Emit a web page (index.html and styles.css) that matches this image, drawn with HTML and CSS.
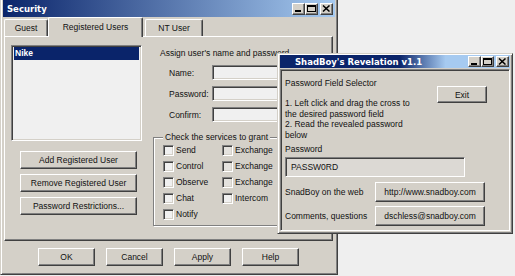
FILE: index.html
```html
<!DOCTYPE html>
<html lang="en">
<head>
  <meta charset="UTF-8">
  <title>Security</title>
  <link rel="stylesheet" href="styles.css">
</head>
<body>

<div class="desktop">

  <div class="window security">
    <div class="titlebar">
      <span>Security</span>
      <div class="tbtns">
        <span class="tbtn"><svg width="9" height="7" viewBox="0 0 9 7"><rect x="1" y="5" width="6" height="2"/></svg></span>
        <span class="tbtn"><svg width="9" height="7" viewBox="0 0 9 7"><path fill-rule="evenodd" d="M0 0h9v7H0z M1 2v4h7V2z"/></svg></span>
        <span class="tbtn close"><svg width="9" height="7" viewBox="0 0 9 7"><path d="M1 0.5L7.5 6.5M7.5 0.5L1 6.5" stroke="#000" stroke-width="1.5" fill="none"/></svg></span>
      </div>
    </div>

    <div class="tabs">
      <div class="tab guest">Guest</div>
      <div class="tab active">Registered Users</div>
      <div class="tab nt">NT User</div>
    </div>

    <div class="tab-panel">
      <div class="left-col">
        <div class="listbox">
          <div class="list-item selected">Nike</div>
        </div>
        <button class="btn side-btn first">Add Registered User</button>
        <button class="btn side-btn">Remove Registered User</button>
        <button class="btn side-btn">Password Restrictions...</button>
      </div>

      <div class="right-col">
        <div class="assign">Assign user's name and password</div>
        <div class="field-row"><label>Name:</label><div class="field"></div></div>
        <div class="field-row"><label>Password:</label><div class="field"></div></div>
        <div class="field-row"><label>Confirm:</label><div class="field"></div></div>

        <fieldset class="services">
          <legend>Check the services to grant</legend>
          <div class="check-grid">
            <div class="check"><span class="box"></span>Send</div>
            <div class="check"><span class="box dim"></span>Exchange</div>
            <div class="check"><span class="box"></span>Control</div>
            <div class="check"><span class="box dim"></span>Exchange</div>
            <div class="check"><span class="box"></span>Observe</div>
            <div class="check"><span class="box dim"></span>Exchange</div>
            <div class="check"><span class="box"></span>Chat</div>
            <div class="check"><span class="box"></span>Intercom</div>
            <div class="check"><span class="box"></span>Notify</div>
          </div>
        </fieldset>
      </div>
    </div>

    <div class="dialog-buttons">
      <button class="btn dlg-btn">OK</button>
      <button class="btn dlg-btn">Cancel</button>
      <button class="btn dlg-btn">Apply</button>
      <button class="btn dlg-btn">Help</button>
    </div>
  </div>

  <div class="window reveal">
    <div class="titlebar">
      <span>ShadBoy's Revelation v1.1</span>
      <div class="tbtns">
        <span class="tbtn"><svg width="9" height="7" viewBox="0 0 9 7"><rect x="1" y="5" width="6" height="2"/></svg></span>
        <span class="tbtn"><svg width="9" height="7" viewBox="0 0 9 7"><path fill-rule="evenodd" d="M0 0h9v7H0z M1 2v4h7V2z"/></svg></span>
        <span class="tbtn close"><svg width="9" height="7" viewBox="0 0 9 7"><path d="M1 0.5L7.5 6.5M7.5 0.5L1 6.5" stroke="#000" stroke-width="1.5" fill="none"/></svg></span>
      </div>
    </div>

    <div class="client">
      <div class="rev-top">
        <div class="rev-text">
          <div class="heading">Password Field Selector</div>
          <div class="steps">
            1. Left click and drag the cross to<br>
            the desired password field<br>
            2. Read the revealed password<br>
            below
          </div>
        </div>
        <button class="btn exit-btn">Exit</button>
      </div>

      <div class="pw-label">Password</div>
      <div class="pw-field">PASSW0RD</div>

      <div class="link-row">
        <span class="link-label">SnadBoy on the web</span>
        <button class="btn link-btn">http://www.snadboy.com</button>
      </div>
      <div class="link-row second">
        <span class="link-label">Comments, questions</span>
        <button class="btn link-btn">dschless@snadboy.com</button>
      </div>
    </div>
  </div>

</div>

</body>
</html>
```

FILE: styles.css
```css
* {
  box-sizing: border-box;
}
body {
  margin: 0;
  background: #efefef;
  font-family: "Liberation Sans", Arial, sans-serif;
  font-size: 8.5px;
  color: #111;
}
.desktop {
  position: relative;
  width: 515px;
  height: 276px;
  overflow: hidden;
}

/* windows */
.window {
  position: absolute;
  display: flex;
  flex-direction: column;
  background: #d4d0c8;
  border: 1px solid;
  border-color: #d4d0c8 #404040 #404040 #d4d0c8;
  box-shadow: inset 1px 1px #fff, inset -1px -1px #808080;
  padding: 2px;
}
.security {
  left: 0;
  top: -3px;
  width: 338px;
  height: 278px;
}
.reveal {
  left: 277px;
  top: 53px;
  width: 236px;
  height: 181px;
  padding: 1px 2px 2px;
}

.titlebar {
  display: flex;
  align-items: center;
  justify-content: space-between;
  flex-shrink: 0;
  color: #fff;
  font-family: "DejaVu Sans", sans-serif;
  font-weight: bold;
  font-size: 8.5px;
  white-space: nowrap;
}
.security .titlebar {
  height: 17px;
  padding: 0 2px 0 4px;
  background: linear-gradient(to right, #0a246a, #a6caf0);
}
.reveal .titlebar {
  height: 13px;
  padding: 0 1px 0 15px;
  background: linear-gradient(to right, #0a246a 52%, #a6caf0 72%);
}

.tbtns {
  display: flex;
}
.tbtn {
  display: flex;
  align-items: center;
  justify-content: center;
  width: 13px;
  height: 11px;
  background: #d4d0c8;
  border: 1px solid;
  border-color: #fff #404040 #404040 #fff;
  box-shadow: inset -1px -1px #808080;
}
.security .tbtn {
  height: 12px;
}
.tbtn.close {
  margin-left: 2px;
}

/* generic 3d button */
.btn {
  display: flex;
  align-items: center;
  justify-content: center;
  padding: 0;
  font: inherit;
  color: #111;
  background: #d4d0c8;
  border: 1px solid;
  border-color: #fff #404040 #404040 #fff;
  box-shadow: inset -1px -1px #808080;
  white-space: nowrap;
}

/* tabs */
.tabs {
  position: relative;
  z-index: 1;
  display: flex;
  align-items: flex-end;
  height: 19px;
  margin: 0 2px 0 1px;
}
.tab {
  display: flex;
  align-items: center;
  justify-content: center;
  height: 17px;
  background: #d4d0c8;
  border: 1px solid;
  border-color: #fff #404040 transparent #fff;
  border-bottom: none;
  border-radius: 2px 2px 0 0;
  box-shadow: inset -1px 0 #808080;
}
.tab.guest {
  width: 44px;
}
.tab.active {
  width: 95px;
  height: 20px;
  margin-bottom: -1px;
  padding-bottom: 2px;
}
.tab.nt {
  width: 58px;
  margin-left: 2px;
}

.tab-panel {
  display: flex;
  gap: 11px;
  height: 205px;
  margin: 0 2px 0 1px;
  padding: 8px 6px;
  border: 1px solid;
  border-color: #fff #404040 #404040 #fff;
  box-shadow: inset -1px -1px #808080;
}

.left-col {
  display: flex;
  flex-direction: column;
  width: 131px;
  flex-shrink: 0;
}
.listbox {
  height: 96px;
  padding: 1px 2px;
  background: #f0f0f0;
  border: 1px solid;
  border-color: #808080 #fff #fff #808080;
  box-shadow: inset 1px 1px #404040, inset -1px -1px #d4d0c8;
}
.list-item {
  height: 13px;
  line-height: 13px;
  padding-left: 1px;
}
.list-item.selected {
  background: #0a246a;
  color: #fff;
  font-weight: bold;
}
.side-btn {
  width: 117px;
  height: 18px;
  margin: 5px 0 0 9px;
}
.side-btn.first {
  margin-top: 10px;
}

.right-col {
  display: flex;
  flex-direction: column;
  width: 126px;
  flex-shrink: 0;
  white-space: nowrap;
}
.assign {
  margin: 3px 0 0 7px;
  line-height: 11px;
}
.field-row {
  display: flex;
  align-items: center;
  margin-top: 6px;
}
.field-row:first-of-type {
  margin-top: 8px;
}
.field-row label {
  width: 43px;
  margin-left: 16px;
  flex-shrink: 0;
}
.field {
  width: 100px;
  height: 15px;
  flex-shrink: 0;
  background: #f0f0f0;
  border: 1px solid;
  border-color: #808080 #fff #fff #808080;
  box-shadow: inset 1px 1px #404040, inset -1px -1px #d4d0c8;
}

.services {
  width: 125px;
  margin: 10px 0 0;
  padding: 2px 0 0 9px;
  border: 1px solid #808080;
  box-shadow: inset 1px 1px #fff, 1px 1px #fff;
  min-inline-size: 0;
}
.services legend {
  padding: 0 2px;
  line-height: 11px;
  background: #d4d0c8;
}
.check-grid {
  display: grid;
  grid-template-columns: 59px auto;
  grid-auto-rows: 16px;
}
.check {
  display: flex;
  align-items: flex-start;
  gap: 2px;
  line-height: 11px;
}
.box {
  width: 11px;
  height: 11px;
  flex-shrink: 0;
  background: #f0f0f0;
  border: 1px solid;
  border-color: #808080 #fff #fff #808080;
  box-shadow: inset 1px 1px #404040, inset -1px -1px #d4d0c8;
}
.box.dim {
  background: #e4e2de;
}

.dialog-buttons {
  display: flex;
  gap: 11px;
  margin-top: 7px;
  padding-left: 35px;
}
.dlg-btn {
  width: 57px;
  height: 18px;
}

/* revelation client area */
.client {
  flex: 1;
  margin-top: 1px;
  padding: 8px 0 0 4px;
  border: 1px solid;
  border-color: #808080 #fff #fff #808080;
  box-shadow: inset 1px 1px #404040;
  white-space: nowrap;
}
.rev-top {
  display: flex;
  align-items: flex-start;
}
.heading {
  line-height: 11px;
}
.steps {
  margin-top: 9px;
  line-height: 10.5px;
}
.exit-btn {
  width: 50px;
  height: 17px;
  margin: 8px 22px 0 auto;
}
.pw-label {
  margin-top: 4px;
  line-height: 11px;
}
.pw-field {
  width: 180px;
  height: 20px;
  margin-top: 2px;
  padding-left: 5px;
  line-height: 18px;
  background: #dcd9d4;
  border: 1px solid;
  border-color: #808080 #fff #fff #808080;
  box-shadow: inset 1px 1px #404040;
}
.link-row {
  display: flex;
  align-items: center;
  margin-top: 5px;
}
.link-row.second {
  margin-top: 4px;
}
.link-label {
  width: 90px;
}
.link-btn {
  width: 110px;
  height: 20px;
}
```
